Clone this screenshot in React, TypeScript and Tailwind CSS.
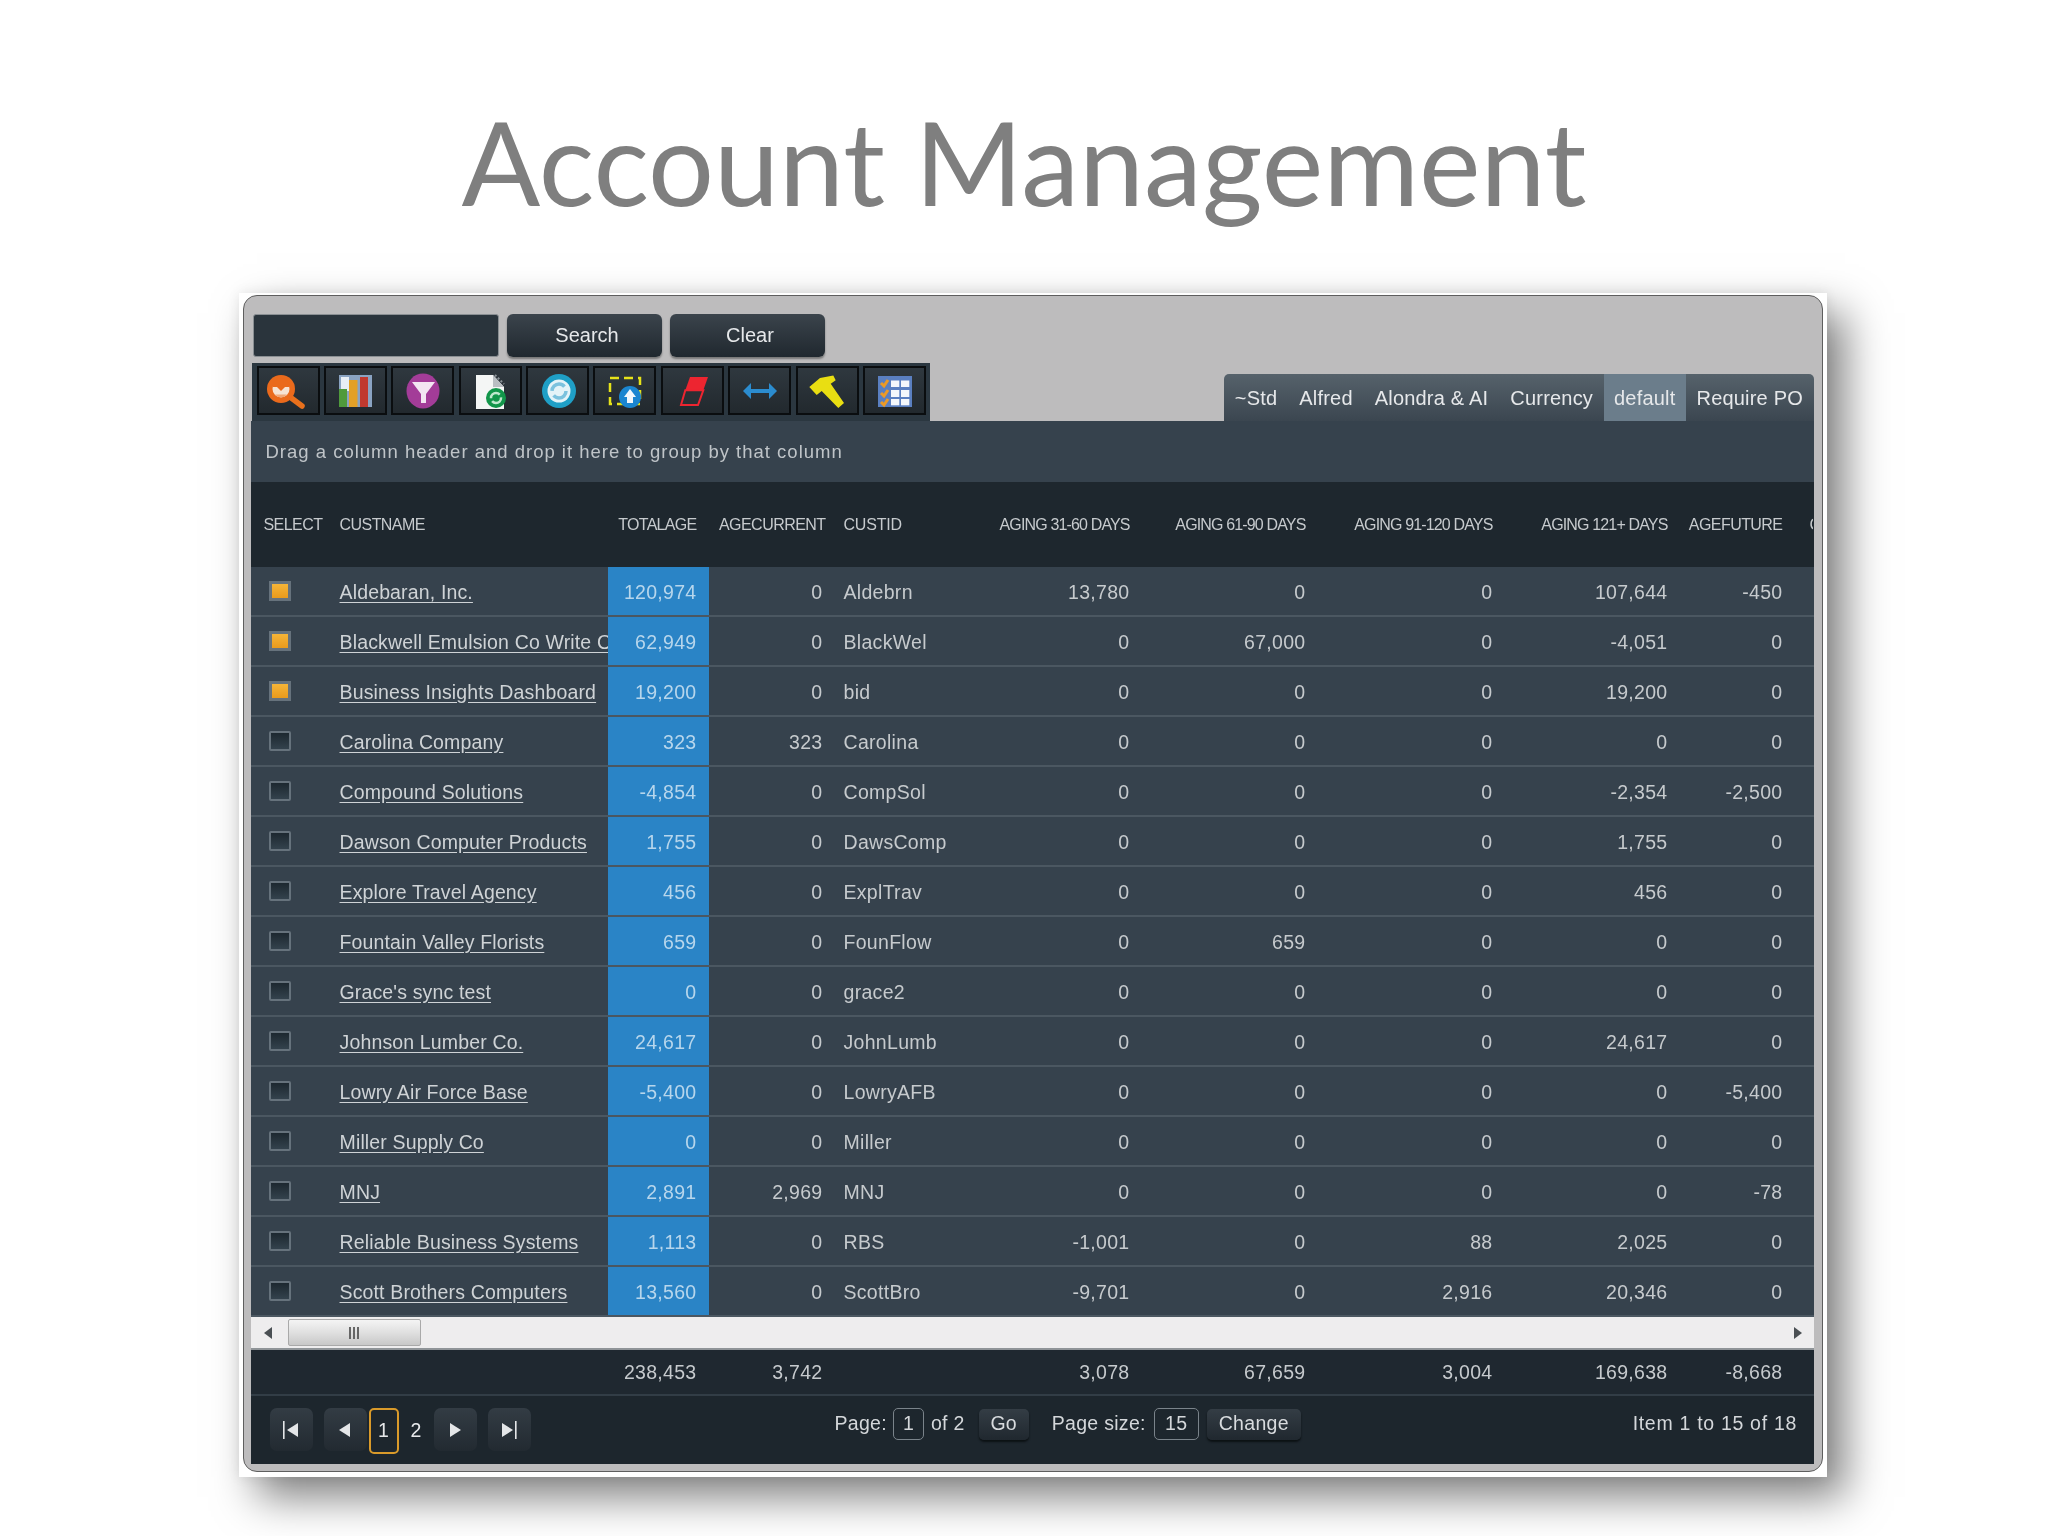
const sans = { fontFamily: '"Liberation Sans", Arial, sans-serif' };

const cols = "grid grid-cols-[79px_278px_101px_124px_167px_140px_176px_187px_175px_115px_20px]";

type Row = [boolean, string, string, string, string, string, string, string, string, string];
const rows: Row[] = [
  [true, "Aldebaran, Inc.", "120,974", "0", "Aldebrn", "13,780", "0", "0", "107,644", "-450"],
  [true, "Blackwell Emulsion Co Write Off", "62,949", "0", "BlackWel", "0", "67,000", "0", "-4,051", "0"],
  [true, "Business Insights Dashboard", "19,200", "0", "bid", "0", "0", "0", "19,200", "0"],
  [false, "Carolina Company", "323", "323", "Carolina", "0", "0", "0", "0", "0"],
  [false, "Compound Solutions", "-4,854", "0", "CompSol", "0", "0", "0", "-2,354", "-2,500"],
  [false, "Dawson Computer Products", "1,755", "0", "DawsComp", "0", "0", "0", "1,755", "0"],
  [false, "Explore Travel Agency", "456", "0", "ExplTrav", "0", "0", "0", "456", "0"],
  [false, "Fountain Valley Florists", "659", "0", "FounFlow", "0", "659", "0", "0", "0"],
  [false, "Grace's sync test", "0", "0", "grace2", "0", "0", "0", "0", "0"],
  [false, "Johnson Lumber Co.", "24,617", "0", "JohnLumb", "0", "0", "0", "24,617", "0"],
  [false, "Lowry Air Force Base", "-5,400", "0", "LowryAFB", "0", "0", "0", "0", "-5,400"],
  [false, "Miller Supply Co", "0", "0", "Miller", "0", "0", "0", "0", "0"],
  [false, "MNJ", "2,891", "2,969", "MNJ", "0", "0", "0", "0", "-78"],
  [false, "Reliable Business Systems", "1,113", "0", "RBS", "-1,001", "0", "88", "2,025", "0"],
  [false, "Scott Brothers Computers", "13,560", "0", "ScottBro", "-9,701", "0", "2,916", "20,346", "0"],
];

const tabs = ["~Std", "Alfred", "Alondra & AI", "Currency", "default", "Require PO"];

function Svg({ children }: { children: React.ReactNode }) {
  return (
    <svg viewBox="2 2 59 45" className="w-full h-full block">
      {children}
    </svg>
  );
}

const icons = [
  <Svg key="1">
    <line x1="33" y1="31" x2="45" y2="40" stroke="#e8701c" strokeWidth="5.5" strokeLinecap="round" />
    <circle cx="24" cy="23" r="14" fill="#ea6a1c" />
    <circle cx="24" cy="23" r="8.5" fill="#f6e3d3" />
    <path d="M15.5 21 H20 L24 25 L28 21 H32.5 A8.5 8.5 0 0 0 15.5 21 Z" fill="#ea6a1c" />
    <path d="M18 28.5 H30 L27 31 H21 Z" fill="#f0a878" />
  </Svg>,
  <Svg key="2">
    <rect x="15" y="9" width="33" height="32" fill="#8aa3c2" />
    <rect x="17" y="11" width="8" height="14" fill="#e8eef5" />
    <rect x="15" y="23" width="8" height="18" fill="#4f9a3c" />
    <rect x="25" y="14" width="8.5" height="27" fill="#e2a027" />
    <rect x="36" y="11" width="8" height="30" fill="#c0392f" />
  </Svg>,
  <Svg key="3">
    <ellipse cx="32" cy="25" rx="16.5" ry="17.5" fill="#a33c98" />
    <path d="M21 16 H44 L35 28 V37 H30 V28 Z" fill="#f3e6f2" />
  </Svg>,
  <Svg key="4">
    <path d="M17 9 H34 L45 21 V43 H17 Z" fill="#f4f6f5" />
    <path d="M34 9 L45 21 H34 Z" fill="#b9bec2" />
    <path d="M36 9 L45 18" stroke="#8b9298" strokeWidth="2" strokeDasharray="2 2" fill="none" />
    <circle cx="37" cy="32" r="10" fill="#12964a" />
    <circle cx="37" cy="32" r="5" fill="none" stroke="#bfe8cd" strokeWidth="2.5" strokeDasharray="12 3" />
  </Svg>,
  <Svg key="5">
    <circle cx="33" cy="25" r="17" fill="#1f9fc6" />
    <circle cx="33" cy="25" r="11.5" fill="#e4f3f8" />
    <circle cx="33" cy="25" r="7" fill="none" stroke="#7cc2de" strokeWidth="3.5" strokeDasharray="17 5" />
  </Svg>,
  <Svg key="6">
    <rect x="17" y="12" width="30" height="26" fill="none" stroke="#e6e21a" strokeWidth="2.5" strokeDasharray="9 5" />
    <circle cx="37" cy="31" r="11" fill="#1b86d0" />
    <path d="M37 23 L43 31 H40 V37 H34 V31 H31 Z" fill="#f2f8fc" />
  </Svg>,
  <Svg key="7">
    <path d="M29 11 H47 L42.3 24.3 H24.3 Z" fill="#ed2530" />
    <path d="M24.3 24.3 H42.3 L37 39 H20 Z" fill="#2a3035" stroke="#ed2530" strokeWidth="2" />
  </Svg>,
  <Svg key="8">
    <path d="M15 25 L23 17 V23 H41 V17 L49 25 L41 33 V27 H23 V33 Z" fill="#2b8ccf" />
  </Svg>,
  <Svg key="9">
    <path d="M13.3 21 L24 12 L37.3 9.5 L39.7 14.3 L34.7 17.7 L48 37 L42.3 42 L25.7 25 L20.7 29 Z" fill="#e9de12" />
  </Svg>,
  <Svg key="10">
    <rect x="15" y="10" width="34" height="31" fill="#5a7fc0" />
    <rect x="28" y="14.5" width="8.3" height="6.5" fill="#f4f7fb" />
    <rect x="38" y="14.5" width="8.3" height="6.5" fill="#f4f7fb" />
    <rect x="28" y="24" width="8.3" height="7" fill="#f4f7fb" />
    <rect x="38" y="24" width="8.3" height="7" fill="#f4f7fb" />
    <rect x="28" y="33" width="8.3" height="6.3" fill="#f4f7fb" />
    <rect x="38" y="33" width="8.3" height="6.3" fill="#f4f7fb" />
    <path d="M18 17 L21 20 L25 14 M18 27 L21 30 L25 24 M18 36 L21 39 L25 33" stroke="#ec9a26" strokeWidth="3" fill="none" />
  </Svg>,
];

function PagerButton({ children }: { children: React.ReactNode }) {
  return (
    <div className="w-[43px] h-[43px] rounded-[7px] bg-gradient-to-b from-[#333c44] to-[#222a31] flex items-center justify-center">
      {children}
    </div>
  );
}

function PageSvg({ d, lineX }: { d: string; lineX?: number }) {
  return (
    <svg viewBox="0 0 20 20" className="w-5 h-5">
      <path d={d} fill="#e4e6e8" />
      {lineX !== undefined && <rect x={lineX} y="1" width="1.6" height="18" fill="#e4e6e8" />}
    </svg>
  );
}

function SmallButton({ children, w }: { children: React.ReactNode; w: string }) {
  return (
    <div className={`${w} h-[31px] rounded-[5px] bg-gradient-to-b from-[#343d45] to-[#20282f] shadow-[0_2px_2px_#0c1114] flex items-center justify-center text-[#d8dbde]`}>
      {children}
    </div>
  );
}

export default function App() {
  return (
    <div className="w-[2048px] h-[1536px] overflow-hidden bg-white blur-[0.5px]" style={sans}>
      <div className="h-[293px] pt-[96px] text-center">
        <h1
          className="text-[#7f7f7f] text-[116.5px] leading-[130px] font-normal"
          style={{ fontFamily: 'Lato, "Open Sans", sans-serif' }}
        >
          Account Management
        </h1>
      </div>

      <div className="ml-[239px] w-[1588px] h-[1184px] bg-white p-[2px_4px_5px_4px] shadow-[18px_20px_40px_rgba(0,0,0,0.5),0_0_12px_rgba(0,0,0,0.08)]">
        <div className="h-full rounded-[14px] border-[1.5px] border-[#5e5e5e] bg-[#bdbcbd] pl-[6.5px] pr-[8px] pt-[18px] flex flex-col">
          {/* search row */}
          <div className="flex gap-[8px] h-[43px] pl-[2px] text-[20px] text-[#e6e8ea]">
            <div className="w-[246px] rounded-[3px] bg-[#2a343c] border border-[#8a8f93]" />
            <div className="w-[155px] rounded-[6px] bg-gradient-to-b from-[#3b444c] to-[#20282f] shadow-[0_2px_2px_#777] flex items-center justify-center pl-[6px] pb-[2px]">
              Search
            </div>
            <div className="w-[155px] rounded-[6px] bg-gradient-to-b from-[#3b444c] to-[#20282f] shadow-[0_2px_2px_#777] flex items-center justify-center pl-[6px] pb-[2px]">
              Clear
            </div>
          </div>

          {/* toolbar + tabs */}
          <div className="mt-[6px] flex items-end justify-between h-[58px]">
            <div className="ml-[1px] w-[678px] h-[58px] bg-[#2b3740] flex gap-[4.4px] pl-[5px] pt-[3px]">
              {icons.map((icon, i) => (
                <div
                  key={i}
                  className="w-[63px] h-[49px] border-2 border-[#0a0d0f] bg-gradient-to-b from-[#2f383f] to-[#22292e] overflow-hidden"
                >
                  {icon}
                </div>
              ))}
            </div>
            <div className="h-[47px] flex rounded-t-[5px] overflow-hidden bg-gradient-to-b from-[#56626b] to-[#3b4650] text-[20px] tracking-[0.2px] text-[#e6e8ea]">
              {tabs.map((t) => (
                <div
                  key={t}
                  className={
                    t === "default"
                      ? "px-[10px] flex items-center bg-[#6b7d8b]"
                      : "px-[11px] flex items-center"
                  }
                >
                  {t}
                </div>
              ))}
            </div>
          </div>

          {/* grid */}
          <div className="bg-[#36424d] text-[19.5px] tracking-[0.3px] text-[#c6cacd]">
            <div className="h-[61px] flex items-center pl-[15px] text-[18.5px] tracking-[1px] text-[#bfc4c8]">
              Drag a column header and drop it here to group by that column
            </div>

            <div className={`${cols} h-[85px] bg-[#1e272e] text-[16px] tracking-[-0.55px] text-[#c6cacd] items-center`}>
              <div className="pl-[13px]">SELECT</div>
              <div className="pl-[10px]">CUSTNAME</div>
              <div className="text-right pr-[12px] tracking-[-0.7px]">TOTALAGE</div>
              <div className="text-right pr-[7px] whitespace-nowrap">AGECURRENT</div>
              <div className="pl-[11px] tracking-[-0.2px]">CUSTID</div>
              <div className="text-right pr-[10px] tracking-[-0.85px] whitespace-nowrap">AGING 31-60 DAYS</div>
              <div className="text-right pr-[10px] tracking-[-0.85px] whitespace-nowrap">AGING 61-90 DAYS</div>
              <div className="text-right pr-[10px] tracking-[-0.85px] whitespace-nowrap">AGING 91-120 DAYS</div>
              <div className="text-right pr-[10px] tracking-[-0.85px] whitespace-nowrap">AGING 121+ DAYS</div>
              <div className="text-right pr-[10px] whitespace-nowrap">AGEFUTURE</div>
              <div className="overflow-hidden pl-[17px] whitespace-nowrap">C</div>
            </div>

            {rows.map((r) => (
              <div key={r[1]} className={`${cols} h-[50px] items-center border-b-2 border-[#4b5761]`}>
                <div className="pl-[18px]">
                  {r[0] ? (
                    <div className="w-[22px] h-[20px] border-[3px] border-[#66727c] bg-gradient-to-b from-[#f5b436] to-[#e89a1c]" />
                  ) : (
                    <div className="w-[22px] h-[20px] rounded-[2px] border-2 border-[#66727c] bg-gradient-to-b from-[#1d2830] to-[#34424d]" />
                  )}
                </div>
                <div className="pl-[10px] pt-[3px] tracking-[0.15px] whitespace-nowrap overflow-hidden">
                  <span className="underline underline-offset-[3px] text-[#cfd3d6]">{r[1]}</span>
                </div>
                <div className="self-stretch pt-[3px] bg-[#2a84c6] text-[#b7d6ec] pr-[12px] flex items-center justify-end">
                  {r[2]}
                </div>
                <div className="text-right pt-[3px] pr-[10px]">{r[3]}</div>
                <div className="pl-[11px] pt-[3px]">{r[4]}</div>
                <div className="text-right pt-[3px] pr-[10px]">{r[5]}</div>
                <div className="text-right pt-[3px] pr-[10px]">{r[6]}</div>
                <div className="text-right pt-[3px] pr-[10px]">{r[7]}</div>
                <div className="text-right pt-[3px] pr-[10px]">{r[8]}</div>
                <div className="text-right pt-[3px] pr-[10px]">{r[9]}</div>
                <div />
              </div>
            ))}

            {/* scrollbar */}
            <div className="h-[33px] bg-[#eeedee] border-b-2 border-[#8f9498] flex items-center pl-[13px] pr-[12px]">
              <svg viewBox="0 0 8 12" className="w-[8px] h-[12px]"><path d="M8 0 V12 L0 6 Z" fill="#4a4f53" /></svg>
              <div className="ml-[16px] w-[133px] h-[27px] rounded-[2px] border border-[#a9a9a9] bg-gradient-to-b from-[#f4f4f4] via-[#e0e0e0] to-[#c8c8c8] flex items-center justify-center gap-[2px]">
                <div className="w-[2px] h-[12px] bg-[#666]" />
                <div className="w-[2px] h-[12px] bg-[#666]" />
                <div className="w-[2px] h-[12px] bg-[#666]" />
              </div>
              <svg viewBox="0 0 8 12" className="ml-auto w-[8px] h-[12px]"><path d="M0 0 V12 L8 6 Z" fill="#4a4f53" /></svg>
            </div>

            {/* totals */}
            <div className={`${cols} h-[46px] pt-[2px] items-center bg-[#1f2830] border-b-2 border-[#323d46]`}>
              <div />
              <div />
              <div className="text-right pr-[12px]">238,453</div>
              <div className="text-right pr-[10px]">3,742</div>
              <div />
              <div className="text-right pr-[10px]">3,078</div>
              <div className="text-right pr-[10px]">67,659</div>
              <div className="text-right pr-[10px]">3,004</div>
              <div className="text-right pr-[10px]">169,638</div>
              <div className="text-right pr-[10px]">-8,668</div>
              <div />
            </div>

            {/* pager */}
            <div className="h-[68px] bg-[#1d262d] flex pl-[19px] pr-[17px] pt-[12px]">
              <div className="flex items-start">
                <PagerButton><PageSvg d="M17 3 V17 L6 10 Z" lineX={2} /></PagerButton>
                <div className="ml-[11px]"><PagerButton><PageSvg d="M15 3 V17 L4 10 Z" /></PagerButton></div>
                <div className="ml-[2px] w-[30px] h-[46px] rounded-[5px] border-2 border-[#d99a2a] flex items-center justify-center text-[#e4e6e8]">1</div>
                <div className="w-[35px] h-[46px] flex items-center justify-center text-[#e8eaec]">2</div>
                <PagerButton><PageSvg d="M5 3 V17 L16 10 Z" /></PagerButton>
                <div className="ml-[11px]"><PagerButton><PageSvg d="M3 3 V17 L14 10 Z" lineX={16} /></PagerButton></div>
              </div>

              <div className="ml-[304px] flex items-center h-[32px] text-[#d4d7da]">
                <span>Page:</span>
                <div className="ml-[6px] w-[31px] h-[32px] rounded-[5px] border border-[#7a838a] flex items-center justify-center">1</div>
                <span className="ml-[7px]">of 2</span>
                <div className="ml-[14px]"><SmallButton w="w-[50px]">Go</SmallButton></div>
                <span className="ml-[23px]">Page size:</span>
                <div className="ml-[8px] w-[45px] h-[32px] rounded-[5px] border border-[#7a838a] flex items-center justify-center">15</div>
                <div className="ml-[8px]"><SmallButton w="w-[94px]">Change</SmallButton></div>
              </div>

              <div className="ml-auto h-[32px] flex items-center tracking-[0.7px] text-[#d4d7da]">Item 1 to 15 of 18</div>
            </div>
          </div>
        </div>
      </div>
    </div>
  );
}
